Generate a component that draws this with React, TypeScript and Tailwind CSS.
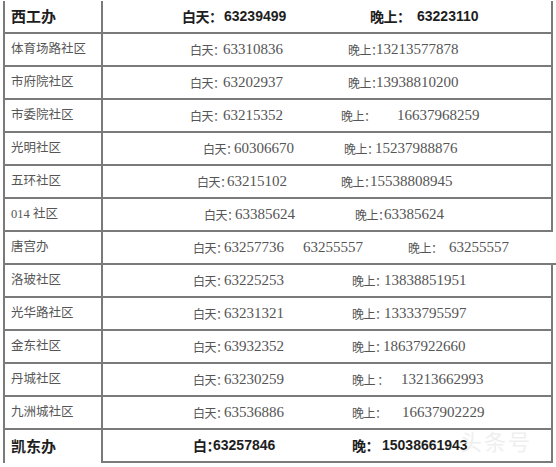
import React from "react";

type Seg = { w: number; t: string; k: "l" | "n" };
type Row = { name: string; bold?: boolean; start: number; segs: Seg[] };

const L = (w: number, t: string): Seg => ({ w, t, k: "l" });
const N = (w: number, t: string): Seg => ({ w, t, k: "n" });

// cell content starts at x=103
const rows: Row[] = [
  { name: "西工办", bold: true, start: 182, segs: [L(42, "白天："), N(146, "63239499"), L(47, "晚上："), N(120, "63223110")] },
  { name: "体育场路社区", start: 190, segs: [L(33, "白天："), N(125, "63310836"), L(28, "晚上："), N(120, "13213577878")] },
  { name: "市府院社区", start: 190, segs: [L(33, "白天："), N(125, "63202937"), L(28, "晚上："), N(120, "13938810200")] },
  { name: "市委院社区", start: 190, segs: [L(33, "白天："), N(118, "63215352"), L(56, "晚上："), N(120, "16637968259")] },
  { name: "光明社区", start: 203, segs: [L(31, "白天："), N(110, "60306670"), L(31, "晚上："), N(120, "15237988876")] },
  { name: "五环社区", start: 197, segs: [L(30, "白天："), N(114, "63215102"), L(29, "晚上："), N(120, "15538808945")] },
  { name: "014 社区", start: 204, segs: [L(31, "白天："), N(120, "63385624"), L(29, "晚上："), N(120, "63385624")] },
  { name: "唐宫办", start: 193, segs: [L(31, "白天："), N(79, "63257736"), N(105, "63255557"), L(41, "晚上："), N(110, "63255557")] },
  { name: "洛玻社区", start: 193, segs: [L(31, "白天："), N(128, "63225253"), L(32, "晚上："), N(120, "13838851951")] },
  { name: "光华路社区", start: 193, segs: [L(31, "白天："), N(128, "63231321"), L(32, "晚上："), N(120, "13333795597")] },
  { name: "金东社区", start: 193, segs: [L(31, "白天："), N(128, "63932352"), L(31, "晚上："), N(120, "18637922660")] },
  { name: "丹城社区", start: 193, segs: [L(31, "白天："), N(128, "63230259"), L(49, "晚上 ："), N(120, "13213662993")] },
  { name: "九洲城社区", start: 193, segs: [L(31, "白天："), N(128, "63536886"), L(50, "晚上："), N(120, "16637902229")] },
  { name: "凯东办", bold: true, start: 193, segs: [L(20, "白："), N(139, "63257846"), L(30, "晚："), N(120, "15038661943")] },
];

function TableRow({ r, last }: { r: Row; last: boolean }) {
  return (
    <div className="flex h-[33px] w-[550px]">
      <div
        className={
          last
            ? "w-[100px] shrink-0 border-l-2 border-r-2 border-[#7a7a7a] flex items-center pl-[6px]"
            : "w-[100px] shrink-0 border-l-2 border-r-2 border-b-2 border-[#7a7a7a] flex items-center pl-[6px]"
        }
      >
        <span
          className={
            r.bold
              ? "text-[15px] font-bold text-[#1e1e1e] whitespace-nowrap [font-family:'Noto_Sans_CJK_SC',sans-serif]"
              : "text-[12.5px] text-[#555] whitespace-nowrap [font-family:'Liberation_Serif','Noto_Sans_CJK_SC',serif]"
          }
        >
          {r.name}
        </span>
      </div>
      <div className="flex-1 border-r-2 border-b-2 border-[#7a7a7a] flex items-center whitespace-nowrap">
        <span className="shrink-0" style={{ width: r.start - 103 }} />
        {r.segs.map((s, i) =>
          s.k === "l" ? (
            <span
              key={i}
              className={
                r.bold
                  ? "shrink-0 overflow-visible text-[14px] font-bold text-[#1e1e1e] tracking-[-0.5px] [font-family:'Noto_Sans_CJK_SC',sans-serif]"
                  : "shrink-0 overflow-visible text-[12px] text-[#555] tracking-[-0.5px] [font-family:'Noto_Sans_CJK_SC',sans-serif]"
              }
              style={{ width: s.w }}
            >
              {s.t}
            </span>
          ) : (
            <span
              key={i}
              className={
                r.bold
                  ? "shrink-0 text-[14px] font-bold text-[#1e1e1e] [font-family:'Liberation_Sans',sans-serif]"
                  : "shrink-0 text-[15px] text-[#555] [font-family:'Liberation_Serif',serif]"
              }
              style={{ width: s.w }}
            >
              {s.t}
            </span>
          )
        )}
      </div>
    </div>
  );
}

export default function App() {
  return (
    <div className="relative w-[556px] h-[467px] bg-white overflow-hidden">
      <div className="flex flex-col pl-[3px] pt-[1px]">
        {rows.map((r, i) => (
          <TableRow key={i} r={r} last={i === rows.length - 1} />
        ))}
      </div>
      <div className="absolute left-[460px] top-[424px] text-[22px] text-[#ececec] opacity-80 [font-family:'Noto_Sans_CJK_SC',sans-serif] tracking-[2px]">
        头条号
      </div>
    </div>
  );
}
